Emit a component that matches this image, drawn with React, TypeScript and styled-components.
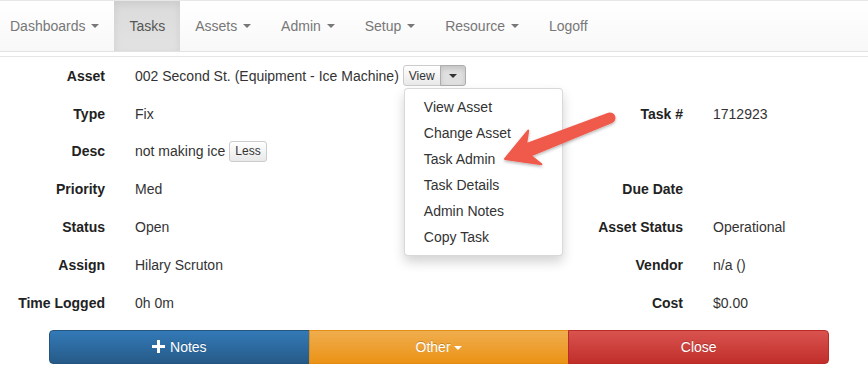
import React from "react";
import styled, { createGlobalStyle } from "styled-components";

const Global = createGlobalStyle`
  html, body { margin: 0; padding: 0; background: #fff; }
  body {
    font-family: "Liberation Sans", Arial, Helvetica, sans-serif;
    font-size: 14px;
    color: #333;
  }
  * { box-sizing: border-box; }
`;

const Page = styled.div`
  position: relative;
  width: 868px;
  height: 377px;
  overflow: hidden;
`;

const Navbar = styled.nav`
  display: flex;
  height: 52px;
  background: linear-gradient(to bottom, #fff 0%, #f8f8f8 100%);
  border-top: 1px solid #e7e7e7;
  border-bottom: 1px solid #e2e2e2;
  margin-bottom: 4px;
`;

const NavItem = styled.div<{ $active?: boolean }>`
  display: flex;
  align-items: center;
  padding: 0 15px;
  height: 50px;
  color: ${(p) => (p.$active ? "#555" : "#777")};
  background: ${(p) =>
    p.$active ? "linear-gradient(to bottom, #dbdbdb 0%, #e2e2e2 100%)" : "transparent"};
  box-shadow: ${(p) => (p.$active ? "inset 0 3px 9px rgba(0,0,0,.075)" : "none")};
  white-space: pre;
  &:first-child { padding-left: 10px; }
`;

const Caret = styled.span<{ $color?: string }>`
  display: inline-block;
  width: 0;
  height: 0;
  margin-left: 2px;
  border-top: 4px solid ${(p) => p.$color || "currentColor"};
  border-left: 4px solid transparent;
  border-right: 4px solid transparent;
  vertical-align: middle;
`;

const Content = styled.div`
  border-top: 1px solid #e6e6e6;
`;

const Grid = styled.div`
  display: grid;
  grid-template-columns: 105px 1fr 130px 155px;
  column-gap: 30px;
  grid-auto-rows: 37.8px;
  align-items: center;
`;

const Label = styled.div`
  text-align: right;
  font-weight: bold;
  color: #222;
  white-space: nowrap;
`;

const Value = styled.div`
  position: relative;
  display: flex;
  align-items: center;
  white-space: nowrap;
`;

const BtnGroup = styled.div`
  position: relative;
  display: inline-flex;
  margin-left: 4px;
`;

const SmallBtn = styled.button<{ $pressed?: boolean; $first?: boolean; $last?: boolean }>`
  font-family: inherit;
  font-size: 12px;
  line-height: 18px;
  height: 21px;
  padding: 0 5px;
  color: #333;
  border: 1px solid #ccc;
  margin-left: ${(p) => (p.$first === false ? "-1px" : "0")};
  border-radius: ${(p) =>
    p.$first && p.$last ? "3px" : p.$first ? "3px 0 0 3px" : p.$last ? "0 3px 3px 0" : "0"};
  background: ${(p) =>
    p.$pressed
      ? "#e0e0e0"
      : "linear-gradient(to bottom, #fff 0%, #e9e9e9 100%)"};
  box-shadow: ${(p) => (p.$pressed ? "inset 0 3px 5px rgba(0,0,0,.125)" : "inset 0 1px 0 rgba(255,255,255,.15)")};
  border-color: ${(p) => (p.$pressed ? "#adadad" : "#ccc")};
  display: inline-flex;
  align-items: center;
  justify-content: center;
`;

const CaretBtn = styled(SmallBtn)`
  width: 26px;
  color: #333;
`;

const Menu = styled.ul`
  position: absolute;
  top: 100%;
  left: 1px;
  margin: 2px 0 0;
  padding: 5px 0;
  list-style: none;
  width: 159px;
  background: #fff;
  border: 1px solid rgba(0, 0, 0, 0.15);
  border-radius: 4px;
  box-shadow: 0 6px 12px rgba(0, 0, 0, 0.175);
  z-index: 5;
`;

const MenuItem = styled.li`
  padding: 0 19px;
  line-height: 26px;
  color: #333;
  white-space: nowrap;
`;

const ActionBar = styled.div`
  display: flex;
  margin: 8px 0 0 49px;
  width: 780px;
`;

const ActionBtn = styled.button<{ $variant: "primary" | "warning" | "danger" }>`
  flex: 1;
  height: 34px;
  font-family: inherit;
  font-size: 14px;
  color: #fff;
  display: flex;
  align-items: center;
  justify-content: center;
  gap: 5px;
  border: 1px solid
    ${(p) => (p.$variant === "primary" ? "#245580" : p.$variant === "warning" ? "#e38d13" : "#b92c28")};
  background: ${(p) =>
    p.$variant === "primary"
      ? "linear-gradient(to bottom, #337ab7 0%, #265a88 100%)"
      : p.$variant === "warning"
      ? "linear-gradient(to bottom, #f0ad4e 0%, #eb9316 100%)"
      : "linear-gradient(to bottom, #d9534f 0%, #c12e2a 100%)"};
  text-shadow: 0 -1px 0 rgba(0, 0, 0, 0.2);
  margin-left: -1px;
  &:first-child { border-radius: 4px 0 0 4px; margin-left: 0; }
  &:last-child { border-radius: 0 4px 4px 0; }
`;

const Overlay = styled.svg`
  position: absolute;
  left: 0;
  top: 0;
  pointer-events: none;
  z-index: 10;
`;

const navItems = [
  { label: "Dashboards", caret: true },
  { label: "Tasks", active: true },
  { label: "Assets", caret: true },
  { label: "Admin", caret: true },
  { label: "Setup", caret: true },
  { label: "Resource", caret: true },
  { label: "Logoff" },
];

const menuItems = ["View Asset", "Change Asset", "Task Admin", "Task Details", "Admin Notes", "Copy Task"];

export default function App() {
  return (
    <Page>
      <Global />
      <Navbar>
        {navItems.map((n) => (
          <NavItem key={n.label} $active={n.active}>
            {n.label}
            {n.caret ? " " : ""}
            {n.caret && <Caret />}
          </NavItem>
        ))}
      </Navbar>
      <Content>
        <Grid>
          <Label>Asset</Label>
          <Value style={{ gridColumn: "2 / span 3" }}>
            002 Second St. (Equipment - Ice Machine)
            <BtnGroup>
              <SmallBtn $first>View</SmallBtn>
              <CaretBtn $first={false} $last $pressed>
                <Caret $color="#333" style={{ marginLeft: 0 }} />
              </CaretBtn>
              <Menu>
                {menuItems.map((m) => (
                  <MenuItem key={m}>{m}</MenuItem>
                ))}
              </Menu>
            </BtnGroup>
          </Value>

          <Label>Type</Label>
          <Value>Fix</Value>
          <Label>Task #</Label>
          <Value>1712923</Value>

          <Label>Desc</Label>
          <Value>
            not making ice
            <BtnGroup>
              <SmallBtn $first $last>Less</SmallBtn>
            </BtnGroup>
          </Value>
          <Label />
          <Value />

          <Label>Priority</Label>
          <Value>Med</Value>
          <Label>Due Date</Label>
          <Value />

          <Label>Status</Label>
          <Value>Open</Value>
          <Label>Asset Status</Label>
          <Value>Operational</Value>

          <Label>Assign</Label>
          <Value>Hilary Scruton</Value>
          <Label>Vendor</Label>
          <Value>n/a ()</Value>

          <Label>Time Logged</Label>
          <Value>0h 0m</Value>
          <Label>Cost</Label>
          <Value>$0.00</Value>
        </Grid>
        <ActionBar>
          <ActionBtn $variant="primary">
            <svg width="13" height="13" viewBox="0 0 13 13">
              <path d="M5 0h3v5h5v3H8v5H5V8H0V5h5z" fill="#fff" />
            </svg>
            Notes
          </ActionBtn>
          <ActionBtn $variant="warning">
            <span>
              Other <Caret $color="#fff" style={{ marginLeft: 0 }} />
            </span>
          </ActionBtn>
          <ActionBtn $variant="danger">Close</ActionBtn>
        </ActionBar>
      </Content>
      <Overlay width="868" height="377" viewBox="0 0 868 377">
        <defs>
          <filter id="sh" x="-10%" y="-20%" width="130%" height="150%">
            <feDropShadow dx="0" dy="1.5" stdDeviation="1.5" floodColor="#000" floodOpacity="0.3" />
          </filter>
        </defs>
        <path
          d="M505 159 L528.2 130.6 L526.1 144.3 L608.6 113.7 A4.5 4.5 0 0 1 611.8 122.1 L530.5 155.5 L541.4 164.2 Z"
          fill="#f05a4c"
          stroke="#f05a4c"
          strokeWidth="2"
          strokeLinejoin="round"
          filter="url(#sh)"
        />
      </Overlay>
    </Page>
  );
}
